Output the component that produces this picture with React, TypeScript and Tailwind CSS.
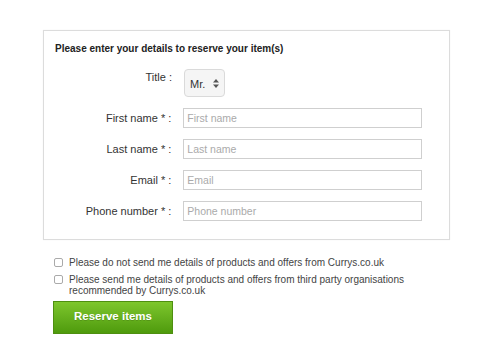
import React, { useState } from 'react';

const fields = [
  { name: 'firstName', label: 'First name * :', placeholder: 'First name' },
  { name: 'lastName', label: 'Last name * :', placeholder: 'Last name' },
  { name: 'email', label: 'Email * :', placeholder: 'Email' },
  { name: 'phone', label: 'Phone number * :', placeholder: 'Phone number' },
];

const App: React.FC = () => {
  const [title, setTitle] = useState('Mr.');

  return (
    <div className="min-h-screen bg-white pt-[30px] pl-[43px] font-['Liberation_Sans',Arial,sans-serif] text-[#333]">
      <form className="w-[407px]">
        <div className="border border-[#dcdcdc] shadow-[0_0_1px_rgba(0,0,0,0.08)] pt-[41px] pb-[18px] pl-[11px] pr-[27px] relative">
          <h2 className="absolute left-[11px] top-[11px] text-[10px] font-bold text-[#222] leading-[13px]">
            Please enter your details to reserve your item(s)
          </h2>
          <div className="flex flex-col gap-[11px]">
            <div className="flex items-start">
              <label className="w-[117px] text-right text-[11px] pt-[1px] mt-[-4px]">Title :</label>
              <div className="ml-[12px] mt-[-3px] w-[41px] h-[28px] rounded-[4px] border border-[#dadada] bg-[#f5f5f5] flex items-center justify-between px-[5px]">
                <span className="text-[11px] text-[#333] mt-[2px]">{title}</span>
                <svg width="6" height="9" viewBox="0 0 6 9" className="mt-[1px]">
                  <path d="M3 0 L6 3.5 H0 Z" fill="#555" />
                  <path d="M3 9 L6 5.5 H0 Z" fill="#555" />
                </svg>
              </div>
            </div>
            {fields.map(f => (
              <div key={f.name} className="flex items-center">
                <label htmlFor={f.name} className="w-[117px] text-right text-[11px]">
                  {f.label}
                </label>
                <input
                  id={f.name}
                  name={f.name}
                  placeholder={f.placeholder}
                  onChange={() => setTitle(title)}
                  className="ml-[12px] w-[240px] h-[20px] border border-[#cfcfcf] px-[3px] text-[10.5px] placeholder-[#aaa] outline-none"
                />
              </div>
            ))}
          </div>
        </div>

        <div className="pl-[11px] pt-[17px] text-[10px] text-[#444] leading-[11.5px]">
          <label className="flex items-start gap-[6px]">
            <input type="checkbox" className="mt-[1px] w-[9px] h-[9px] shrink-0 appearance-none border border-[#aaa] rounded-[2px] bg-white" />
            <span>Please do not send me details of products and offers from Currys.co.uk</span>
          </label>
          <label className="flex items-start gap-[6px] mt-[5px]">
            <input type="checkbox" className="mt-[1px] w-[9px] h-[9px] shrink-0 appearance-none border border-[#aaa] rounded-[2px] bg-white" />
            <span className="w-[345px]">
              Please send me details of products and offers from third party organisations recommended by Currys.co.uk
            </span>
          </label>
          <button
            type="submit"
            className="mt-[4px] -ml-[1px] w-[120px] h-[33px] border border-[#4e8f10] bg-gradient-to-b from-[#7dc62c] to-[#4f9b0c] text-white font-bold text-[11.5px] [text-shadow:0_1px_0_rgba(0,0,0,0.15)]"
          >
            Reserve items
          </button>
        </div>
      </form>
    </div>
  );
};

export default App;
